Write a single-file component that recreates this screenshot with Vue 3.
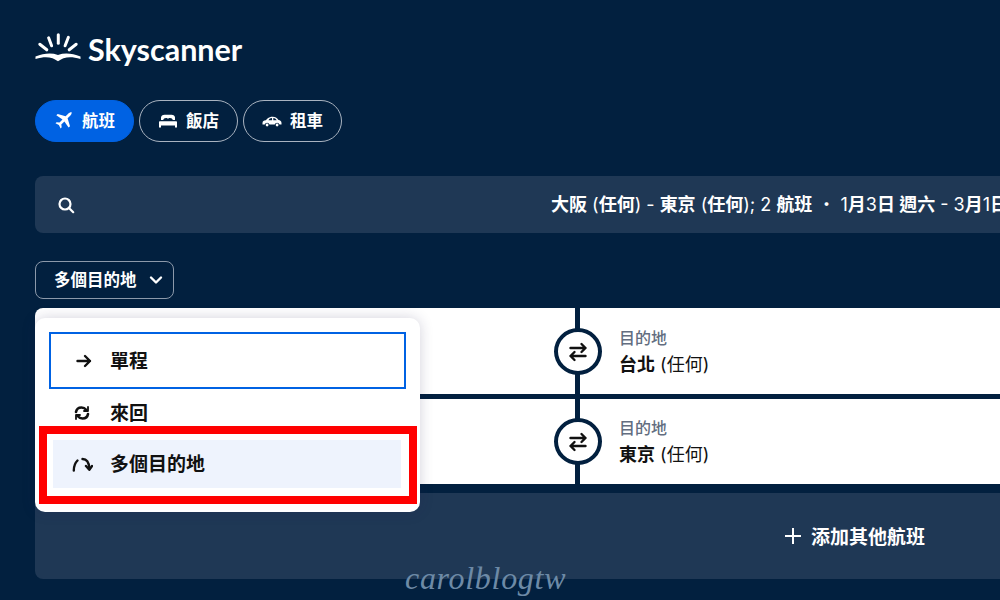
<script setup>
const tabs = [
  { label: "航班", icon: "plane", active: true },
  { label: "飯店", icon: "bed", active: false },
  { label: "租車", icon: "car", active: false },
];
const legs = ["台北", "東京"];
</script>

<template>
  <main class="page">
    <header class="logo">
      <svg class="logo-mark" width="46" height="30" viewBox="0 0 46 30">
        <g stroke="#fff" stroke-width="3" stroke-linecap="round" fill="none">
          <path d="M23.300 1.800v8.500" />
          <path d="M13.600 4.800l3 8" />
          <path d="M33.400 4.300l-3.300 8.500" />
          <path d="M4.800 11.300l7 5.500" />
          <path d="M41.200 11.300l-7 5.500" />
        </g>
        <path d="M.5 23.500c8-3 15.500-4 22.500-1.500c7-2.500 14.500-1.500 22.500 1.500v2.500c-7-2-12-2.300-17-.7c-2.200.8-3.800 2.200-5.500 3c-1.700-.8-3.300-2.200-5.500-3c-5-1.600-10-1.300-17 .7z" fill="#fff" />
      </svg>
      <span class="logo-text">Skyscanner</span>
    </header>

    <nav class="tabs">
      <button v-for="tab in tabs" :key="tab.label" class="tab" :class="{ active: tab.active }">
        <svg v-if="tab.icon === 'plane'" width="20" height="20" viewBox="0 0 20 20">
          <path d="M18.300 1.700c-1-.9-2.800-.3-4.100 1l-2.600 2.600-7.900-2.400L2.300 4.300l6.200 4.200-3 3.100-2.900-.4-1.100 1.100 3.400 1.700 1.700 3.400 1.100-1.100-.4-2.900 3.100-3 4.200 6.200 1.400-1.400-2.400-7.900 2.600-2.600c1.300-1.300 1.900-3 1.100-4z" fill="#fff" />
        </svg>
        <svg v-else-if="tab.icon === 'bed'" width="20" height="20" viewBox="0 0 20 20">
          <path d="M3 9V6.500C3 5 4.500 3.700 6.500 3.700h7C15.500 3.700 17 5 17 6.500V9h-2.200C14.500 7.700 13.500 7 12 7c-1 0-1.700.4-2 1c-.3-.6-1-1-2-1C6.500 7 5.500 7.700 5.200 9z" fill="#fff" />
          <path d="M2 10.300h16c.6 0 1 .4 1 1V16.500h-2V14.500H3v2H1v-5.200c0-.6.4-1 1-1z" fill="#fff" />
        </svg>
        <svg v-else width="20" height="20" viewBox="0 0 20 20">
          <path fill-rule="evenodd" d="M.5 12c0-1.700 1.300-2.300 3.300-2.700l1.700-1.700C7 6.300 8.500 5.700 10.800 5.700c2.500 0 4 1 5.700 3.300 1.800.3 3 1.200 3 3v1.500h-2a2.500 2.500 0 0 0-4.800 0H7.500a2.500 2.500 0 0 0-4.800 0H.5zM6.500 9.200h3.500V7.100c-1.700.1-2.700.8-3.500 2.100zM11.300 7.100v2.100h3.400c-1-1.400-2-2.100-3.400-2.100z" fill="#fff" />
          <circle cx="5.100" cy="14" r="1.400" fill="#fff" />
          <circle cx="15.100" cy="14" r="1.400" fill="#fff" />
        </svg>
        <span class="tab-label">{{ tab.label }}</span>
      </button>
    </nav>

    <section class="search">
      <svg class="search-icon" width="20" height="20" viewBox="0 0 20 20" fill="none" stroke="#fff" stroke-width="2.200" stroke-linecap="round">
        <circle cx="9" cy="9" r="5.500" />
        <path d="M13.200 13.200l4 4" />
      </svg>
      <span class="search-text"><b>大阪</b> (<b>任何</b>) - <b>東京</b> (<b>任何</b>); 2 <b>航班</b> ・ 1<b>月</b>3<b>日 週六</b> - 3<b>月</b>1<b>日</b></span>
    </section>

    <button class="trip-type">
      <span class="trip-label">多個目的地</span>
      <svg width="14" height="10" viewBox="0 0 14 10" fill="none" stroke="#fff" stroke-width="2.400" stroke-linecap="round" stroke-linejoin="round">
        <path d="M2 2.500l5 5 5-5" />
      </svg>
    </button>

    <div class="form-area">
      <section class="legs">
        <div v-for="dest in legs" :key="dest" class="leg">
          <div class="leg-origin">
            <span class="swap">
              <svg width="22" height="22" viewBox="0 0 22 22" fill="none" stroke="#111" stroke-width="2.400" stroke-linecap="round" stroke-linejoin="round">
                <path d="M3.500 7h15M14.500 3l4 4-4 4" />
                <path d="M18.500 15h-15M7.500 11l-4 4 4 4" />
              </svg>
            </span>
          </div>
          <div class="leg-dest">
            <span class="dest-label">目的地</span>
            <span class="dest-name"><b>{{ dest }}</b> (任何)</span>
          </div>
        </div>
      </section>
      <div class="add-row">
        <svg width="18" height="18" viewBox="0 0 18 18" stroke="#fff" stroke-width="2" stroke-linecap="square">
          <path d="M9 2v14M2 9h14" />
        </svg>
        <span class="add-label">添加其他航班</span>
      </div>

      <div class="menu">
        <div class="menu-item selected">
          <svg width="18" height="18" viewBox="0 0 18 18" fill="none" stroke="#111" stroke-width="2.400" stroke-linecap="round" stroke-linejoin="round">
            <path d="M2.500 9h12.500M10 4l5 5-5 5" />
          </svg>
          <span>單程</span>
        </div>
        <div class="menu-item return">
          <svg width="18" height="18" viewBox="0 0 18 18" fill="none" stroke="#111" stroke-width="2.600" stroke-linecap="round" stroke-linejoin="round">
            <path d="M3 8c.5-3 3-4.500 5.500-4.500c2 0 3.500.8 5 2.500" />
            <path d="M15 3v4h-4" stroke-width="1.800" />
            <path d="M15 10c-.5 3-3 4.500-5.500 4.500c-2 0-3.500-.8-5-2.500" />
            <path d="M3 15v-4h4" stroke-width="1.800" />
          </svg>
          <span>來回</span>
        </div>
        <div class="menu-item multi">
          <svg width="21" height="18" viewBox="0 0 21 18" fill="none" stroke="#111" stroke-width="2.400" stroke-linecap="round" stroke-linejoin="round">
            <path d="M1.800 15.500C1.800 11 3 8 5.500 5.500" />
            <path d="M10.500 4C14.500 4 17 7 17.300 13.500" />
            <path d="M14 11l3.300 3.800L20 11" />
          </svg>
          <span>多個目的地</span>
        </div>
        <div class="highlight"></div>
      </div>
    </div>

    <span class="watermark">carolblogtw</span>
  </main>
</template>

<style scoped>
.page {
  position: relative;
  width: 1000px;
  height: 600px;
  box-sizing: border-box;
  padding: 32px 0 0 35px;
  overflow: hidden;
  background: #02203f;
  color: #fff;
  font-family: Inter, "Noto Sans CJK TC", sans-serif;
}
.logo {
  display: flex;
  align-items: center;
  gap: 7px;
  height: 36px;
}
.logo-mark {
  margin-bottom: 4px;
}
.logo-text {
  font-family: Lato, sans-serif;
  font-size: 30.500px;
  font-weight: 700;
  line-height: 36px;
  margin-bottom: 2px;
}
.tabs {
  display: flex;
  gap: 5px;
  margin-top: 32px;
}
.tab {
  display: flex;
  align-items: center;
  justify-content: center;
  gap: 8px;
  width: 99px;
  height: 42px;
  box-sizing: border-box;
  padding: 0;
  border: 1px solid #a9b3c0;
  border-radius: 21px;
  background: transparent;
  color: #fff;
  font: 700 16.500px Inter, "Noto Sans CJK TC", sans-serif;
}
.tab-label {
  margin-bottom: 3px;
}
.tab.active {
  background: #0062e3;
  border-color: #0062e3;
}
.search {
  display: flex;
  align-items: center;
  width: 965px;
  height: 57px;
  margin-top: 34px;
  border-radius: 8px 0 0 8px;
  background: #1f3855;
  overflow: hidden;
}
.search-icon {
  flex: none;
  margin-left: 21px;
}
.search-text {
  flex: none;
  margin: 0 0 3px 475px;
  font-size: 18px;
  font-weight: 400;
  white-space: nowrap;
}
.search-text b {
  font-weight: 700;
}
.trip-type {
  display: flex;
  align-items: center;
  gap: 12px;
  width: 139px;
  height: 38px;
  box-sizing: border-box;
  margin-top: 28px;
  padding: 0 0 0 18px;
  border: 1px solid #8c99aa;
  border-radius: 8px;
  background: transparent;
  color: #fff;
  font: 700 16.500px Inter, "Noto Sans CJK TC", sans-serif;
}
.trip-label {
  margin-bottom: 3px;
}
.form-area {
  position: relative;
  margin-top: 9px;
}
.legs {
  display: flex;
  flex-direction: column;
  gap: 5px;
  width: 965px;
  border-radius: 8px 0 0 0;
  overflow: hidden;
}
.leg {
  display: flex;
  flex: none;
  gap: 5px;
  height: 86px;
}
.leg + .leg {
  height: 85px;
}
.leg-origin {
  position: relative;
  width: 540px;
  background: #fff;
}
.swap {
  position: absolute;
  right: -26.500px;
  top: 20px;
  z-index: 1;
  display: flex;
  align-items: center;
  justify-content: center;
  width: 48px;
  height: 47px;
  box-sizing: border-box;
  border: 4px solid #02203f;
  border-radius: 50%;
  background: #fff;
}
.leg + .leg .swap {
  top: 19px;
}
.leg-dest {
  flex: 1;
  display: flex;
  flex-direction: column;
  padding: 19px 0 0 39px;
  background: #fff;
  color: #111;
}
.leg + .leg .leg-dest {
  padding-top: 18px;
}
.dest-label {
  font-size: 16px;
  line-height: 22px;
  font-weight: 500;
  color: #626d80;
}
.dest-name {
  margin-top: 3px;
  font-size: 18px;
  line-height: 26px;
  font-weight: 400;
}
.dest-name b {
  font-weight: 700;
}
.add-row {
  display: flex;
  align-items: center;
  gap: 9px;
  width: 965px;
  height: 86px;
  box-sizing: border-box;
  margin-top: 9px;
  padding-left: 749px;
  border-radius: 0 0 0 8px;
  background: #1f3855;
  font-size: 19px;
  font-weight: 700;
}
.add-label {
  margin-bottom: 2px;
}
.menu {
  position: absolute;
  left: 0;
  top: 10px;
  z-index: 2;
  width: 385px;
  height: 194px;
  box-sizing: border-box;
  padding: 14px 14px 0;
  border-radius: 10px;
  background: #fff;
  box-shadow: 0 0 14px rgba(37, 32, 80, 0.2);
  color: #111;
  font-size: 19px;
  font-weight: 700;
}
.menu-item {
  display: flex;
  align-items: center;
  gap: 17px;
  box-sizing: border-box;
  padding-left: 24px;
}
.menu-item span {
  margin-bottom: 3px;
}
.menu-item.selected {
  width: 357px;
  height: 57px;
  border: 2px solid #0062e3;
}
.menu-item.return {
  height: 47px;
  padding-left: 24px;
  gap: 19px;
}
.menu-item.multi {
  width: 348px;
  height: 48px;
  margin: 4px 0 0 4px;
  padding-left: 19px;
  gap: 17px;
  background: #eef3fd;
}
.highlight {
  position: absolute;
  left: 4px;
  top: 108px;
  width: 378px;
  height: 78px;
  box-sizing: border-box;
  border: 8px solid #f00;
}
.watermark {
  position: absolute;
  left: 405px;
  top: 560px;
  font-family: "Liberation Serif", serif;
  font-style: italic;
  font-size: 32px;
  letter-spacing: 0.700px;
  color: #6d8aa6;
}
</style>
